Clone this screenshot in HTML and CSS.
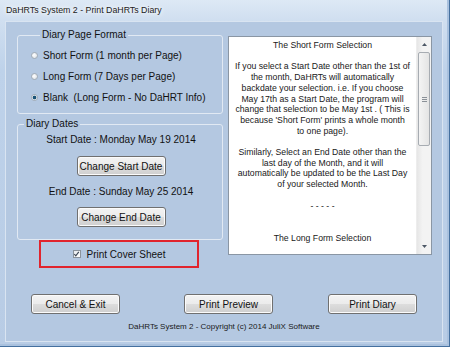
FILE: index.html
```html
<!DOCTYPE html>
<html lang="en">
<head>
    <meta charset="UTF-8">
    <title>DaHRTs System 2 - Print DaHRTs Diary</title>
    <link rel="stylesheet" href="styles.css">
</head>
<body>
    <div class="window">
        <div class="titlebar">DaHRTs System 2 - Print DaHRTs Diary</div>

        <div class="client">
            <div class="main">
                <div class="left">
                    <fieldset class="group format">
                        <legend>Diary Page Format</legend>
                        <label class="option"><span class="radio"></span>Short Form (1 month per Page)</label>
                        <label class="option"><span class="radio"></span>Long Form (7 Days per Page)</label>
                        <label class="option"><span class="radio checked"></span>Blank&nbsp; (Long Form - No DaHRT Info)</label>
                    </fieldset>

                    <fieldset class="group dates">
                        <legend>Diary Dates</legend>
                        <div class="dates-body">
                            <div class="date-line">Start Date : Monday May 19 2014</div>
                            <button class="btn date-btn">Change Start Date</button>
                            <div class="date-line end">End Date : Sunday May 25 2014</div>
                            <button class="btn date-btn last">Change End Date</button>
                        </div>
                    </fieldset>

                    <div class="cover">
                        <span class="check">
                            <svg width="8" height="8" viewBox="0 0 8 8">
                                <path d="M1.5 4 L3.2 6.2 L6.6 1.6" fill="none" stroke="#3b4654" stroke-width="1.3"/>
                            </svg>
                        </span>
                        Print Cover Sheet
                    </div>
                </div>

                <div class="memo">
                    <div class="memo-text">
                        The Short Form Selection<br>
                        <br>
                        If you select a Start Date other than the 1st of<br>
                        the month, DaHRTs will automatically<br>
                        backdate your selection. i.e. If you choose<br>
                        May 17th as a Start Date, the program will<br>
                        change that selection to be May 1st . ( This is<br>
                        because 'Short Form' prints a whole month<br>
                        to one page).<br>
                        <br>
                        Similarly, Select an End Date other than the<br>
                        last day of the Month, and it will<br>
                        automatically be updated to be the Last Day<br>
                        of your selected Month.<br>
                        <br>
                        - - - - -<br>
                        <br>
                        <br>
                        The Long Form Selection
                    </div>
                    <div class="scrollbar">
                        <div class="sb-arrow">
                            <svg width="5" height="3" viewBox="0 0 5 3"><path d="M0 3 L2.5 0 L5 3Z" fill="#4d5866"/></svg>
                        </div>
                        <div class="sb-track">
                            <div class="sb-thumb"><span class="grip"></span></div>
                        </div>
                        <div class="sb-arrow">
                            <svg width="5" height="3" viewBox="0 0 5 3"><path d="M0 0 L2.5 3 L5 0Z" fill="#4d5866"/></svg>
                        </div>
                    </div>
                </div>
            </div>

            <div class="actions">
                <button class="btn">Cancel &amp; Exit</button>
                <button class="btn preview">Print Preview</button>
                <button class="btn diary">Print Diary</button>
            </div>

            <div class="footer">DaHRTs System 2 - Copyright (c) 2014 JuliX Software</div>
        </div>
    </div>
</body>
</html>
```

FILE: styles.css
```css
* {
    box-sizing: border-box;
}

body {
    margin: 0;
    font-family: "Liberation Sans", Arial, sans-serif;
    background: #b9cde6;
}

.window {
    width: 450px;
    height: 347px;
    display: flex;
    flex-direction: column;
    background: linear-gradient(to bottom, #dde9f5 0, #d0dff0 20px, #bed2ea 70px, #b8cce5 100%);
    box-shadow: inset -1px -1px 0 #45709f, inset -3px -3px 0 #a9c1de;
    overflow: hidden;
}

.titlebar {
    height: 21px;
    line-height: 21px;
    padding-left: 6px;
    font-size: 8.8px;
    color: #1c1c1c;
    text-shadow: 0 0 4px #fff, 0 0 6px #fff;
}

.client {
    margin-left: 5px;
    width: 438px;
    height: 321px;
    background: #b4c8e1;
    border: 1px solid #d9e4f1;
    display: flex;
    flex-direction: column;
    font-size: 10px;
    color: #111;
}

.main {
    display: flex;
    align-items: flex-start;
    padding: 7px 0 0 11px;
}

.left {
    width: 206px;
}

/* group boxes */
.group {
    margin: 0;
    border: 1px solid #e1e9f3;
    border-radius: 3px;
    min-width: 0;
}

.group legend {
    padding: 0 2px;
    line-height: 12px;
    font-size: 10px;
    text-align: left;
}

.format {
    height: 85px;
    padding: 4px 0 0 13px;
}

.format legend {
    margin-left: 9px;
}

.option {
    display: flex;
    align-items: center;
    height: 21px;
    white-space: pre;
}

.radio {
    width: 7px;
    height: 7px;
    margin-right: 5px;
    border-radius: 50%;
    border: 1px solid #a3acb6;
    background: radial-gradient(circle at 40% 40%, #ffffff, #d6dce2);
}

.radio.checked {
    background: radial-gradient(circle, #1b5478 0, #1b5478 1.5px, #e9eef3 2.2px);
}

.dates {
    margin-top: 4px;
    height: 122px;
    padding: 0;
}

.dates legend {
    margin-left: 6px;
}

.dates-body {
    padding: 3px 0 0 2px;
    text-align: center;
}

.date-line {
    line-height: 14px;
}

.date-line.end {
    margin-top: 9px;
}

.date-btn {
    display: block;
    width: 97px;
    margin: 9px auto 0;
}

.date-btn.last {
    margin-top: 8px;
}

.cover {
    margin-left: 22px;
    width: 160px;
    height: 28px;
    border: 2px solid #e1242d;
    display: flex;
    align-items: center;
    justify-content: center;
    gap: 6px;
}

.check {
    width: 8px;
    height: 8px;
    display: flex;
    border: 1px solid #8b939c;
    background: linear-gradient(135deg, #e8ebee, #ffffff);
}

.check svg {
    margin: -1px 0 0 -1px;
}

/* text box */
.memo {
    margin: 7px 0 0 5px;
    width: 204px;
    height: 219px;
    border: 1px solid #8a96a4;
    background: #fff;
    display: flex;
}

.memo-text {
    flex: 1;
    padding-top: 3px;
    font-size: 8.7px;
    line-height: 10.7px;
    text-align: center;
    color: #202020;
    white-space: nowrap;
}

.scrollbar {
    width: 15px;
    display: flex;
    flex-direction: column;
    background: linear-gradient(to right, #e6e6e6, #f3f3f3 40%, #f3f3f3);
    border-left: 1px solid #ededed;
}

.sb-arrow {
    height: 15px;
    display: flex;
    align-items: center;
    justify-content: center;
}

.sb-track {
    flex: 1;
}

.sb-thumb {
    height: 94px;
    margin: 0 1px;
    border: 1px solid #a7acb2;
    border-radius: 2px;
    background: linear-gradient(to right, #f4f4f4, #e4e4e4);
    display: flex;
    align-items: center;
    justify-content: center;
}

.grip {
    width: 5px;
    height: 5px;
    background: repeating-linear-gradient(to bottom, #8a9097 0, #8a9097 1px, transparent 1px, transparent 2px);
}

/* buttons */
.btn {
    height: 20px;
    width: 89px;
    padding: 0;
    font-family: "Liberation Sans", Arial, sans-serif;
    font-size: 10px;
    color: #111;
    border: 1px solid #707070;
    border-radius: 3px;
    background: linear-gradient(to bottom, #f3f3f3 0, #ebebeb 50%, #dddddd 50%, #cfcfcf 100%);
    box-shadow: inset 0 0 0 1px #fbfbfb;
}

.actions {
    display: flex;
    margin-top: 26px;
    padding-left: 25px;
}

.actions .preview {
    margin-left: 64px;
}

.actions .diary {
    margin-left: 55px;
}

.footer {
    margin-top: 7px;
    line-height: 12px;
    font-size: 8px;
    text-align: center;
    color: #1a1a1a;
}
```
